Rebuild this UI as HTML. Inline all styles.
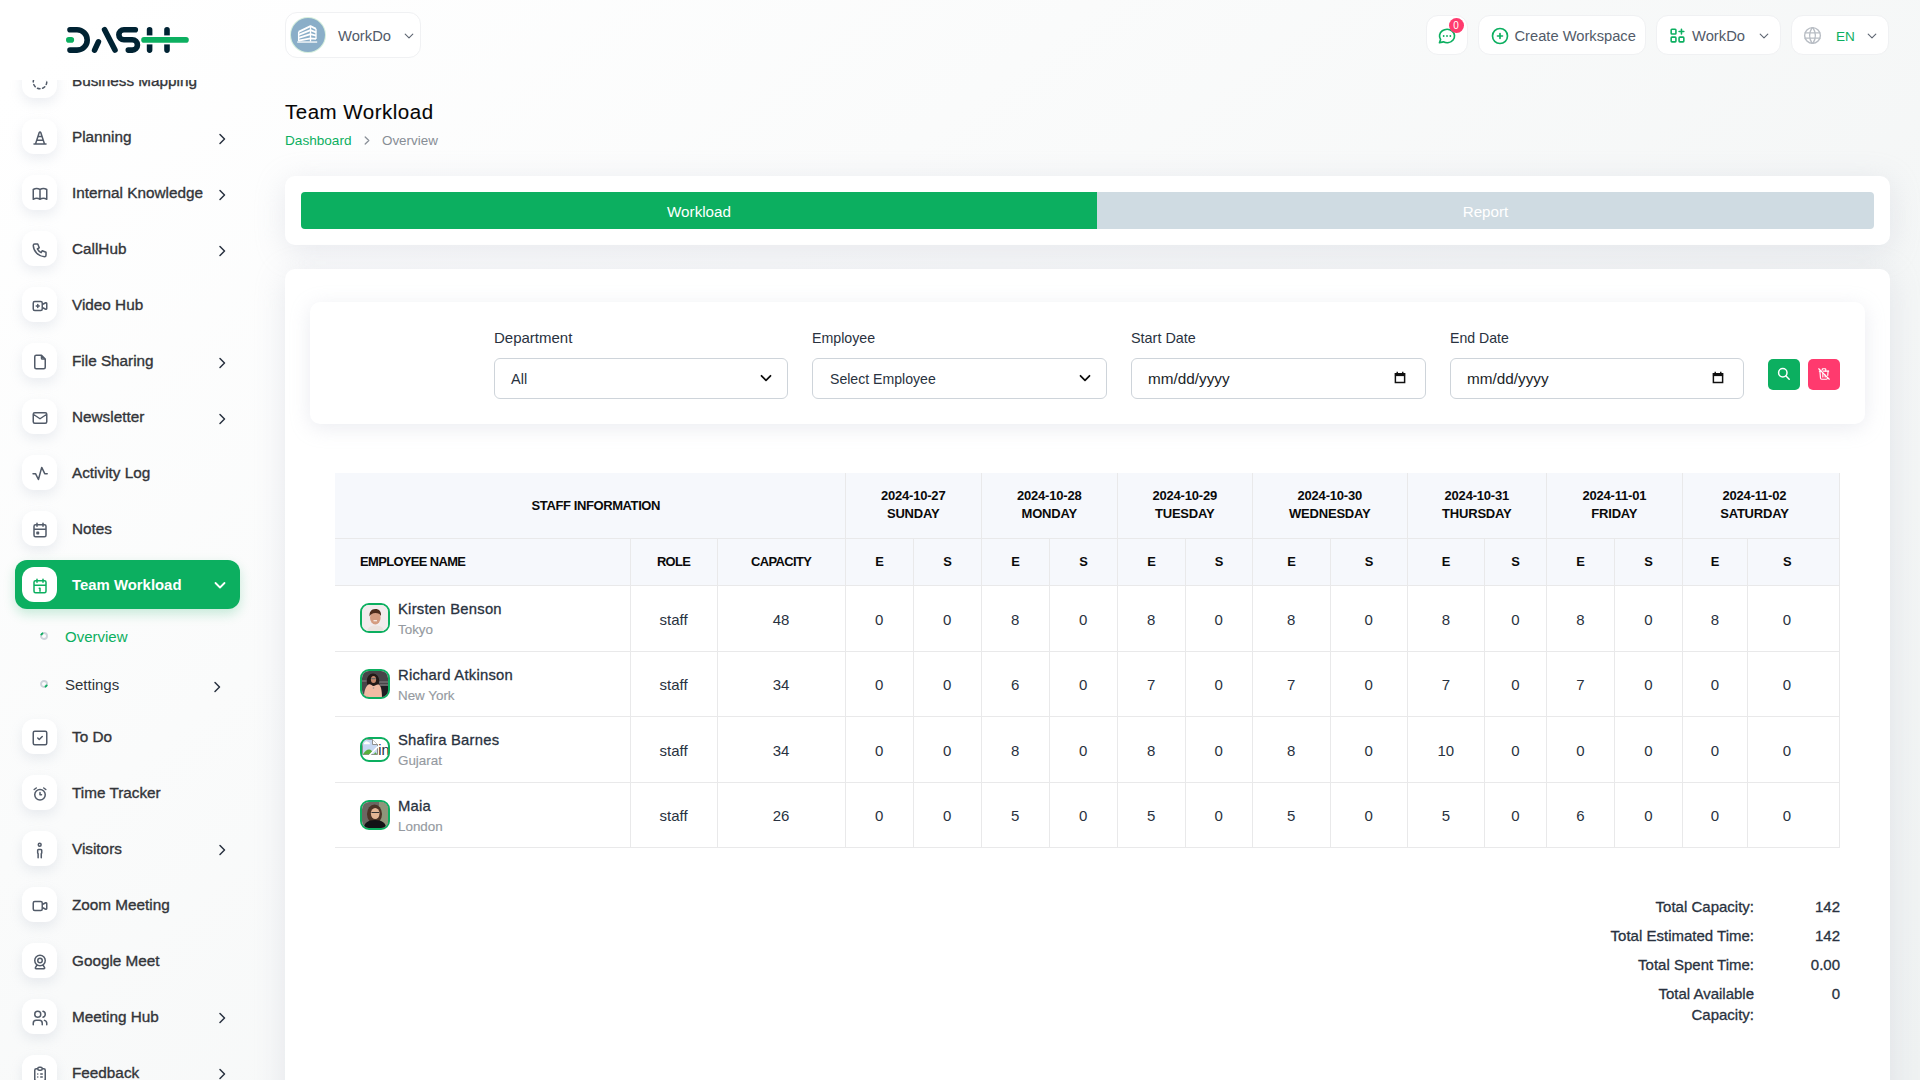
<!DOCTYPE html>
<html><head><meta charset="utf-8">
<style>
*{box-sizing:border-box;margin:0;padding:0}
html,body{width:1920px;height:1080px;overflow:hidden}
body{font-family:"Liberation Sans",sans-serif;color:#293240;position:relative;
background:linear-gradient(141.55deg,rgba(240,244,243,0) 3.46%,#eff2f2 99.86%),#fff}
.abs{position:absolute}
svg{display:block}
/* sidebar */
#navclip{position:absolute;left:0;top:80px;width:255px;height:1000px;overflow:hidden}
.ni{position:absolute;left:0;width:255px;height:36px}
.ni .ib{position:absolute;left:22px;top:0;width:35px;height:35px;background:#fff;border-radius:12px;
box-shadow:0 5px 12px rgba(170,178,195,0.22)}
.ni .ib svg{position:absolute;left:8.5px;top:10px}
.ni .tx{position:absolute;left:72px;top:8.7px;font-size:15.3px;color:#333539;white-space:nowrap;line-height:17px;-webkit-text-stroke:0.35px #333539}
.sub{position:absolute;left:0;width:255px;height:28px}
.sub .dot{position:absolute;left:39px;top:9px}
.sub .stx{position:absolute;left:65px;top:6px;font-size:15px;line-height:17px;color:#30343a}
.ch{position:absolute;left:217px;top:13.5px}
.ch svg{display:block}
.stroke{fill:none;stroke:#525b69;stroke-width:1.6;stroke-linecap:round;stroke-linejoin:round}

.pill{position:absolute;background:#fff;border:1px solid #f0f1f3;border-radius:12px}
.card{position:absolute;background:#fff;border-radius:10px;box-shadow:0 6px 30px rgba(182,186,203,0.3)}
.lbl{position:absolute;font-size:15px;line-height:17px;color:#293240;white-space:nowrap}
.inp{position:absolute;height:41px;border:1px solid #ced4da;border-radius:6px;background:#fff}
.inp span{position:absolute;left:16px;top:12px;font-size:14.5px;line-height:17px;color:#293240;white-space:nowrap}
table.wt{position:absolute;left:335px;top:473px;border-collapse:collapse;table-layout:fixed;width:1505px}
.wt th,.wt td{border:1px solid #e9e9ea;text-align:center;white-space:nowrap;padding:0}
.wt tr:first-child th{border-top:none}
.wt th:first-child,.wt td:first-child{border-left:none}
.wt th{background:#f6f8fc;color:#0a0a0a;font-weight:700;font-size:12.9px;letter-spacing:-0.6px}
.wt td{font-size:15px;color:#293240;padding-top:2.5px}
.wt td:first-child{padding-top:0}
.emp{position:relative;height:64px;text-align:left}
.emp .av{position:absolute;left:25px;top:17.6px;width:30px;height:30px;border:2px solid #0caf60;border-radius:9px;overflow:hidden}
.emp .nm{position:absolute;left:63px;top:15.3px;font-size:14.8px;letter-spacing:0.25px;color:#293240;line-height:17px;-webkit-text-stroke:0.3px #293240}
.emp .ct{position:absolute;left:63px;top:36.6px;font-size:13.4px;color:#959aa1;line-height:15px;-webkit-text-stroke:0.15px #959aa1}
.tot{position:absolute;font-size:15px;line-height:21px;color:#293240;text-align:right;-webkit-text-stroke:0.3px #293240}
</style></head>
<body>
<!-- logo -->
<svg class="abs" style="left:60px;top:20px" width="140" height="40" viewBox="60 20 140 40">
<g fill="none" stroke-linecap="round" stroke-width="5.6">
<path d="M68.8 39.9H71.3" stroke="#0caf60"/>
<path d="M70 29.7H77A10.2 10.2 0 0 1 77 50.1H70" stroke="#002333"/>
<path d="M94.6 50.1L98.4 41.9M104.6 29.7L115 50.1" stroke="#002333"/>
<path d="M135.3 29.7H123.9A5.05 5.05 0 0 0 123.9 39.8H132.3A5.1 5.1 0 0 1 132.3 50.1H128.3" stroke="#002333"/>
<path d="M149.6 29.7V50.1M167 29.7V50.1" stroke="#002333"/>
<path d="M146 39.9H172" stroke="#fff" stroke-width="9" stroke-linecap="butt"/>
<path d="M144 39.9H186" stroke="#0caf60"/>
</g></svg>

<div id="navclip">
<div class="ni" style="top:-16.9px"><div class="ib"><svg width="18" height="18" viewBox="0 0 24 24" style=""><path d="M8.56 3.69a9 9 0 0 0 -2.92 1.95M3.69 8.56a9 9 0 0 0 -.69 3.44M3.69 15.44a9 9 0 0 0 1.95 2.92M8.56 20.31a9 9 0 0 0 3.44 .69M15.44 20.31a9 9 0 0 0 2.92 -1.95M20.31 15.44a9 9 0 0 0 .69 -3.44M20.31 8.56a9 9 0 0 0 -1.95 -2.92M15.44 3.69a9 9 0 0 0 -3.44 -.69" fill="none" stroke="#525b69" stroke-width="2" stroke-linecap="round" stroke-linejoin="round"/></svg></div><div class="tx">Business Mapping</div></div>
<div class="ni" style="top:39.1px"><div class="ib"><svg width="18" height="18" viewBox="0 0 24 24" style=""><path d="M4 20h16M9.4 10h5.2M7.8 15h8.4M6 20l5 -15.275a1.1 1.1 0 0 1 2 0l5 15.275" fill="none" stroke="#525b69" stroke-width="2" stroke-linecap="round" stroke-linejoin="round"/></svg></div><div class="tx">Planning</div><div class="ch"><svg width="10" height="12" viewBox="0 0 10 12"><path d="M3 1.5L7.5 6L3 10.5" fill="none" stroke="#293240" stroke-width="1.5" stroke-linecap="round" stroke-linejoin="round"/></svg></div></div>
<div class="ni" style="top:95.1px"><div class="ib"><svg width="18" height="18" viewBox="0 0 24 24" style=""><path d="M3 19a9 9 0 0 1 9 0a9 9 0 0 1 9 0M3 6a9 9 0 0 1 9 0a9 9 0 0 1 9 0M3 6l0 13M12 6l0 13M21 6l0 13" fill="none" stroke="#525b69" stroke-width="2" stroke-linecap="round" stroke-linejoin="round"/></svg></div><div class="tx">Internal Knowledge</div><div class="ch"><svg width="10" height="12" viewBox="0 0 10 12"><path d="M3 1.5L7.5 6L3 10.5" fill="none" stroke="#293240" stroke-width="1.5" stroke-linecap="round" stroke-linejoin="round"/></svg></div></div>
<div class="ni" style="top:151.1px"><div class="ib"><svg width="18" height="18" viewBox="0 0 24 24" style=""><path d="M5 4h4l2 5l-2.5 1.5a11 11 0 0 0 5 5l1.5 -2.5l5 2v4a2 2 0 0 1 -2 2a16 16 0 0 1 -15 -15a2 2 0 0 1 2 -2" fill="none" stroke="#525b69" stroke-width="2" stroke-linecap="round" stroke-linejoin="round"/></svg></div><div class="tx">CallHub</div><div class="ch"><svg width="10" height="12" viewBox="0 0 10 12"><path d="M3 1.5L7.5 6L3 10.5" fill="none" stroke="#293240" stroke-width="1.5" stroke-linecap="round" stroke-linejoin="round"/></svg></div></div>
<div class="ni" style="top:207.1px"><div class="ib"><svg width="18" height="18" viewBox="0 0 24 24" style=""><path d="M15 10l4.553 -2.276a1 1 0 0 1 1.447 .894v6.764a1 1 0 0 1 -1.447 .894l-4.553 -2.276v-4zM5 6h8a2 2 0 0 1 2 2v8a2 2 0 0 1 -2 2h-8a2 2 0 0 1 -2 -2v-8a2 2 0 0 1 2 -2zM7 12l4 0M9 10l0 4" fill="none" stroke="#525b69" stroke-width="2" stroke-linecap="round" stroke-linejoin="round"/></svg></div><div class="tx">Video Hub</div></div>
<div class="ni" style="top:263.1px"><div class="ib"><svg width="18" height="18" viewBox="0 0 24 24" style=""><path d="M14 3v4a1 1 0 0 0 1 1h4M17 21h-10a2 2 0 0 1 -2 -2v-14a2 2 0 0 1 2 -2h7l5 5v11a2 2 0 0 1 -2 2z" fill="none" stroke="#525b69" stroke-width="2" stroke-linecap="round" stroke-linejoin="round"/></svg></div><div class="tx">File Sharing</div><div class="ch"><svg width="10" height="12" viewBox="0 0 10 12"><path d="M3 1.5L7.5 6L3 10.5" fill="none" stroke="#293240" stroke-width="1.5" stroke-linecap="round" stroke-linejoin="round"/></svg></div></div>
<div class="ni" style="top:319.1px"><div class="ib"><svg width="18" height="18" viewBox="0 0 24 24" style=""><path d="M3 7a2 2 0 0 1 2 -2h14a2 2 0 0 1 2 2v10a2 2 0 0 1 -2 2h-14a2 2 0 0 1 -2 -2v-10zM3 7l9 6l9 -6" fill="none" stroke="#525b69" stroke-width="2" stroke-linecap="round" stroke-linejoin="round"/></svg></div><div class="tx">Newsletter</div><div class="ch"><svg width="10" height="12" viewBox="0 0 10 12"><path d="M3 1.5L7.5 6L3 10.5" fill="none" stroke="#293240" stroke-width="1.5" stroke-linecap="round" stroke-linejoin="round"/></svg></div></div>
<div class="ni" style="top:375.1px"><div class="ib"><svg width="18" height="18" viewBox="0 0 24 24" style=""><path d="M2.7 11.5H6L9.9 19.3L14.3 3.2L18.3 11.5H21.6" fill="none" stroke="#525b69" stroke-width="2" stroke-linecap="round" stroke-linejoin="round"/></svg></div><div class="tx">Activity Log</div></div>
<div class="ni" style="top:431.1px"><div class="ib"><svg width="18" height="18" viewBox="0 0 24 24" style=""><path d="M6 5h12a2 2 0 0 1 2 2v12a2 2 0 0 1 -2 2h-12a2 2 0 0 1 -2 -2v-12a2 2 0 0 1 2 -2zM16 3l0 4M8 3l0 4M4 11l16 0M8 15h2v2h-2z" fill="none" stroke="#525b69" stroke-width="2" stroke-linecap="round" stroke-linejoin="round"/></svg></div><div class="tx">Notes</div></div>
<div class="ni" style="top:638.9px"><div class="ib"><svg width="18" height="18" viewBox="0 0 24 24" style=""><path d="M5 3h14a2 2 0 0 1 2 2v14a2 2 0 0 1 -2 2h-14a2 2 0 0 1 -2 -2v-14a2 2 0 0 1 2 -2zM9 12l2 2l4 -4" fill="none" stroke="#525b69" stroke-width="2" stroke-linecap="round" stroke-linejoin="round"/></svg></div><div class="tx">To Do</div></div>
<div class="ni" style="top:694.9px"><div class="ib"><svg width="18" height="18" viewBox="0 0 24 24" style=""><path d="M12 13m-7 0a7 7 0 1 0 14 0a7 7 0 1 0 -14 0M12 10l0 3l2 0M7 4l-2.75 2M17 4l2.75 2" fill="none" stroke="#525b69" stroke-width="2" stroke-linecap="round" stroke-linejoin="round"/></svg></div><div class="tx">Time Tracker</div></div>
<div class="ni" style="top:750.9px"><div class="ib"><svg width="18" height="18" viewBox="0 0 24 24" style=""><path d="M11.6 5m-1.9 0a1.9 1.9 0 1 0 3.8 0a1.9 1.9 0 1 0 -3.8 0M9.5 22.3V16.9L8.9 16V12.3a1 1 0 0 1 1 -1H13.3a1 1 0 0 1 1 1V16L13.7 16.9V22.3" fill="none" stroke="#525b69" stroke-width="2" stroke-linecap="round" stroke-linejoin="round"/></svg></div><div class="tx">Visitors</div><div class="ch"><svg width="10" height="12" viewBox="0 0 10 12"><path d="M3 1.5L7.5 6L3 10.5" fill="none" stroke="#293240" stroke-width="1.5" stroke-linecap="round" stroke-linejoin="round"/></svg></div></div>
<div class="ni" style="top:806.9px"><div class="ib"><svg width="18" height="18" viewBox="0 0 24 24" style=""><path d="M15 10l4.553 -2.276a1 1 0 0 1 1.447 .894v6.764a1 1 0 0 1 -1.447 .894l-4.553 -2.276v-4zM5 6h8a2 2 0 0 1 2 2v8a2 2 0 0 1 -2 2h-8a2 2 0 0 1 -2 -2v-8a2 2 0 0 1 2 -2z" fill="none" stroke="#525b69" stroke-width="2" stroke-linecap="round" stroke-linejoin="round"/></svg></div><div class="tx">Zoom Meeting</div></div>
<div class="ni" style="top:862.9px"><div class="ib"><svg width="18" height="18" viewBox="0 0 24 24" style=""><path d="M12 10m-7 0a7 7 0 1 0 14 0a7 7 0 1 0 -14 0M12 10m-3 0a3 3 0 1 0 6 0a3 3 0 1 0 -6 0M8 16l-2.091 3.486a1 1 0 0 0 .857 1.514h10.468a1 1 0 0 0 .857 -1.514l-2.091 -3.486" fill="none" stroke="#525b69" stroke-width="2" stroke-linecap="round" stroke-linejoin="round"/></svg></div><div class="tx">Google Meet</div></div>
<div class="ni" style="top:918.9px"><div class="ib"><svg width="18" height="18" viewBox="0 0 24 24" style=""><path d="M9 7m-4 0a4 4 0 1 0 8 0a4 4 0 1 0 -8 0M3 21v-2a4 4 0 0 1 4 -4h4a4 4 0 0 1 4 4v2M16 3.13a4 4 0 0 1 0 7.75M21 21v-2a4 4 0 0 0 -3 -3.85" fill="none" stroke="#525b69" stroke-width="2" stroke-linecap="round" stroke-linejoin="round"/></svg></div><div class="tx">Meeting Hub</div><div class="ch"><svg width="10" height="12" viewBox="0 0 10 12"><path d="M3 1.5L7.5 6L3 10.5" fill="none" stroke="#293240" stroke-width="1.5" stroke-linecap="round" stroke-linejoin="round"/></svg></div></div>
<div class="ni" style="top:974.9px"><div class="ib"><svg width="18" height="18" viewBox="0 0 24 24" style=""><path d="M9 5h-2a2 2 0 0 0 -2 2v12a2 2 0 0 0 2 2h10a2 2 0 0 0 2 -2v-12a2 2 0 0 0 -2 -2h-2M11 3h2a2 2 0 0 1 2 2a2 2 0 0 1 -2 2h-2a2 2 0 0 1 -2 -2a2 2 0 0 1 2 -2zM9 12l.01 0M13 12l2 0M9 16l.01 0M13 16l2 0" fill="none" stroke="#525b69" stroke-width="2" stroke-linecap="round" stroke-linejoin="round"/></svg></div><div class="tx">Feedback</div><div class="ch"><svg width="10" height="12" viewBox="0 0 10 12"><path d="M3 1.5L7.5 6L3 10.5" fill="none" stroke="#293240" stroke-width="1.5" stroke-linecap="round" stroke-linejoin="round"/></svg></div></div><div class="abs" style="left:15px;top:480.2px;width:225px;height:48.5px;background:#0caf60;border-radius:12px;box-shadow:0 5px 12px rgba(12,175,96,0.22)"></div>
<div class="ni" style="top:486.7px"><div class="ib" style="box-shadow:none"><svg width="18" height="18" viewBox="0 0 24 24" style=""><path d="M6 5h12a2 2 0 0 1 2 2v12a2 2 0 0 1 -2 2h-12a2 2 0 0 1 -2 -2v-12a2 2 0 0 1 2 -2zM16 3l0 4M8 3l0 4M4 11l16 0M11 15h1v4" fill="none" stroke="#0caf60" stroke-width="2" stroke-linecap="round" stroke-linejoin="round"/></svg></div><div class="tx" style="color:#fff;font-weight:700;font-size:14.9px;-webkit-text-stroke:0;top:10.8px">Team Workload</div>
<div class="ch" style="left:214px;top:13px"><svg width="12" height="10" viewBox="0 0 12 10"><path d="M1.5 3L6 7.5L10.5 3" fill="none" stroke="#fff" stroke-width="1.8" stroke-linecap="round" stroke-linejoin="round"/></svg></div></div>
<div class="sub" style="top:542px"><svg class="dot" width="10" height="10" viewBox="-1 -1 10 10"><circle cx="4" cy="4" r="3" fill="none" stroke="#cdd2da" stroke-width="1.9"/><path d="M1.1 3.2A3 3 0 0 1 3.2 1.1" fill="none" stroke="#0caf60" stroke-width="1.9"/></svg><div class="stx" style="color:#0caf60">Overview</div></div>
<div class="sub" style="top:590px"><svg class="dot" width="10" height="10" viewBox="-1 -1 10 10"><circle cx="4" cy="4" r="3" fill="none" stroke="#cdd2da" stroke-width="1.9"/><path d="M6.9 4.8A3 3 0 0 1 4.8 6.9" fill="none" stroke="#0caf60" stroke-width="1.9"/></svg><div class="stx">Settings</div><div class="ch" style="left:212px;top:10.5px"><svg width="10" height="12" viewBox="0 0 10 12"><path d="M3 1.5L7.5 6L3 10.5" fill="none" stroke="#293240" stroke-width="1.5" stroke-linecap="round" stroke-linejoin="round"/></svg></div></div>

</div>


<!-- header left -->
<div class="pill" style="left:285px;top:12px;width:136px;height:46px">
 <div class="abs" style="left:5px;top:5px;width:34px;height:34px;border-radius:50%;background:#8aaec8;box-shadow:0 0 0 1px #d6efdd">
  <svg class="abs" style="left:0;top:0" width="34" height="34" viewBox="0 0 34 34"><g stroke="#fff" stroke-width="1.8" fill="none" stroke-linejoin="round"><path d="M7.6 13.9L19.5 8.1L25 10.9M7.6 16.9L19.5 12.1L25 14.3M7.6 19.9L19.5 16.1L25 17.6M7.6 22.7L19.5 20.3L25 20.9"/><path d="M7.6 13.9V23M19.5 8V23.5M25 10.9V21" stroke-width="1.3"/></g><rect x="6.2" y="23.2" width="20" height="1.7" fill="#fff" opacity=".75"/></svg>
 </div>
 <div class="abs" style="left:52px;top:15px;font-size:14.75px;line-height:17px;color:#525b69">WorkDo</div>
 <svg class="abs" style="left:117px;top:19px" width="12" height="8" viewBox="0 0 12 8"><path d="M2.2 2.2L6 5.8L9.8 2.2" fill="none" stroke="#5f6773" stroke-width="1.15" stroke-linecap="round" stroke-linejoin="round"/></svg>
</div>
<!-- header right -->
<div class="pill" style="left:1426px;top:15px;width:42px;height:40px">
 <svg class="abs" style="left:10px;top:9.8px" width="20" height="20" viewBox="0 0 24 24"><path d="M3 20l1.3 -3.9c-2.324 -3.437 -1.426 -7.872 2.1 -10.374c3.526 -2.501 8.59 -2.296 11.845 .48c3.255 2.777 3.695 7.266 1.029 10.501c-2.666 3.235 -7.615 4.215 -11.574 2.293l-4.7 1" fill="none" stroke="#0caf60" stroke-width="2" stroke-linecap="round" stroke-linejoin="round"/><path d="M8 12h.01M12 12h.01M16 12h.01" stroke="#0caf60" stroke-width="2.2" stroke-linecap="round"/></svg>
 <div class="abs" style="left:21.6px;top:1.5px;width:15px;height:15px;border-radius:50%;background:#ff3a6e;color:#fff;font-size:10px;line-height:15px;text-align:center">0</div>
</div>
<div class="pill" style="left:1478px;top:15px;width:168px;height:40px">
 <svg class="abs" style="left:10.5px;top:10px" width="20" height="20" viewBox="0 0 24 24"><circle cx="12" cy="12" r="9" fill="none" stroke="#0caf60" stroke-width="2"/><path d="M9 12h6M12 9v6" stroke="#0caf60" stroke-width="2" stroke-linecap="round"/></svg>
 <div class="abs" style="left:35.5px;top:12px;font-size:14.7px;line-height:17px;color:#525b69">Create Workspace</div>
</div>
<div class="pill" style="left:1656px;top:15px;width:125px;height:40px">
 <svg class="abs" style="left:11px;top:10px" width="19" height="19" viewBox="0 0 24 24"><g fill="none" stroke="#0caf60" stroke-width="2" stroke-linecap="round" stroke-linejoin="round"><rect x="4" y="4" width="6" height="6" rx="1"/><rect x="4" y="14" width="6" height="6" rx="1"/><rect x="14" y="14" width="6" height="6" rx="1"/><path d="M14 7h6M17 4v6"/></g></svg>
 <div class="abs" style="left:35px;top:12px;font-size:14.75px;line-height:17px;color:#525b69">WorkDo</div>
 <svg class="abs" style="left:101px;top:16px" width="12" height="8" viewBox="0 0 12 8"><path d="M2.2 2.2L6 5.8L9.8 2.2" fill="none" stroke="#5f6773" stroke-width="1.15" stroke-linecap="round" stroke-linejoin="round"/></svg>
</div>
<div class="pill" style="left:1791px;top:15px;width:98px;height:40px">
 <svg class="abs" style="left:10px;top:9px" width="21" height="21" viewBox="0 0 24 24"><g fill="none" stroke="#b8bdc4" stroke-width="1.6" stroke-linecap="round" stroke-linejoin="round"><circle cx="12" cy="12" r="9"/><path d="M3.6 9h16.8M3.6 15h16.8M11.5 3a17 17 0 0 0 0 18M12.5 3a17 17 0 0 1 0 18"/></g></svg>
 <div class="abs" style="left:44px;top:12px;font-size:13.6px;line-height:17px;color:#0caf60">EN</div>
 <svg class="abs" style="left:74px;top:16px" width="12" height="8" viewBox="0 0 12 8"><path d="M2.2 2.2L6 5.8L9.8 2.2" fill="none" stroke="#5f6773" stroke-width="1.15" stroke-linecap="round" stroke-linejoin="round"/></svg>
</div>

<!-- title -->
<div class="abs" style="left:285px;top:100px;font-size:20.5px;letter-spacing:0.5px;line-height:24px;color:#060606;-webkit-text-stroke:0.1px #060606">Team Workload</div>
<div class="abs" style="left:285px;top:133px;font-size:13.6px;line-height:16px;color:#0caf60">Dashboard</div>
<svg class="abs" style="left:362px;top:135px" width="10" height="11" viewBox="0 0 10 11"><path d="M3.2 2L6.8 5.5L3.2 9" fill="none" stroke="#8a9098" stroke-width="1.3" stroke-linecap="round" stroke-linejoin="round"/></svg>
<div class="abs" style="left:382px;top:133px;font-size:13.4px;line-height:16px;color:#878d95">Overview</div>

<!-- tabs card -->
<div class="card" style="left:285px;top:176px;width:1605px;height:69px"></div>
<div class="abs" style="left:301px;top:192px;width:796px;height:37px;background:#0caf60;border-radius:4px 0 0 4px;color:#fff;font-size:15.2px;line-height:39px;text-align:center">Workload</div>
<div class="abs" style="left:1097px;top:192px;width:777px;height:37px;background:#cfdbe2;border-radius:0 4px 4px 0;color:#fff;font-size:15.2px;line-height:39px;text-align:center">Report</div>

<!-- main card -->
<div class="card" style="left:285px;top:269px;width:1605px;height:900px"></div>
<div class="card" style="left:310px;top:302px;width:1555px;height:122px;box-shadow:0 4px 20px rgba(182,186,203,0.28)"></div>
<div class="lbl" style="left:494px;top:329px">Department</div>
<div class="lbl" style="left:812px;top:329.7px;font-size:14.2px">Employee</div>
<div class="lbl" style="left:1131px;top:329.5px;font-size:14.4px">Start Date</div>
<div class="lbl" style="left:1450px;top:329.8px;font-size:14.1px">End Date</div>
<div class="inp" style="left:494px;top:358px;width:294px"><span style="left:16px">All</span>
 <svg class="abs" style="left:264px;top:14px" width="14" height="10" viewBox="0 0 14 10"><path d="M2.5 2.8L7 7.3L11.5 2.8" fill="none" stroke="#0d0d0d" stroke-width="1.75" stroke-linecap="round" stroke-linejoin="round"/></svg></div>
<div class="inp" style="left:812px;top:358px;width:295px"><span style="left:17px;font-size:14.1px">Select Employee</span>
 <svg class="abs" style="left:265px;top:14px" width="14" height="10" viewBox="0 0 14 10"><path d="M2.5 2.8L7 7.3L11.5 2.8" fill="none" stroke="#0d0d0d" stroke-width="1.75" stroke-linecap="round" stroke-linejoin="round"/></svg></div>
<div class="inp" style="left:1131px;top:358px;width:295px"><span style="left:16px;font-size:15.3px;top:11px;color:#212529">mm/dd/yyyy</span>
 <svg class="abs" style="left:262px;top:11px" width="12" height="15" viewBox="0 0 13 15"><path d="M1.5 3.5h10v9.5h-10z" fill="none" stroke="#111" stroke-width="1.6"/><path d="M1 3h11v3H1z" fill="#111"/><path d="M3.5 1.2v2.5M9.5 1.2v2.5" stroke="#111" stroke-width="1.5"/></svg></div>
<div class="inp" style="left:1450px;top:358px;width:294px"><span style="left:16px;font-size:15.3px;top:11px;color:#212529">mm/dd/yyyy</span>
 <svg class="abs" style="left:261px;top:11px" width="12" height="15" viewBox="0 0 13 15"><path d="M1.5 3.5h10v9.5h-10z" fill="none" stroke="#111" stroke-width="1.6"/><path d="M1 3h11v3H1z" fill="#111"/><path d="M3.5 1.2v2.5M9.5 1.2v2.5" stroke="#111" stroke-width="1.5"/></svg></div>
<div class="abs" style="left:1768px;top:359px;width:32px;height:31px;background:#0caf60;border-radius:5px">
 <svg class="abs" style="left:9px;top:8px" width="14" height="14" viewBox="0 0 14 14"><circle cx="5.8" cy="5.8" r="4.2" fill="none" stroke="#fff" stroke-width="1.5"/><path d="M9 9L12.2 12.2" stroke="#fff" stroke-width="1.5" stroke-linecap="round"/></svg></div>
<div class="abs" style="left:1808px;top:359px;width:32px;height:31px;background:#ff3a6e;border-radius:5px">
 <svg class="abs" style="left:9px;top:8px" width="14" height="14" viewBox="0 0 24 24"><g fill="none" stroke="#fff" stroke-width="2" stroke-linecap="round" stroke-linejoin="round"><path d="M3 3l18 18"/><path d="M4 7h3m4 0h9"/><path d="M10 11v6M14 14v3"/><path d="M5 7l1 12a2 2 0 0 0 2 2h8a2 2 0 0 0 2 -2l.077 -.923"/><path d="M18.384 14.373l.616 -7.373"/><path d="M9 5v-1a1 1 0 0 1 1 -1h4a1 1 0 0 1 1 1v3"/></g></svg></div>

<table class="wt"><colgroup><col style="width:295px"><col style="width:87px"><col style="width:128px"><col style="width:68px"><col style="width:68px"><col style="width:68px"><col style="width:68px"><col style="width:68px"><col style="width:67px"><col style="width:78px"><col style="width:77px"><col style="width:77px"><col style="width:62px"><col style="width:68px"><col style="width:68px"><col style="width:65px"><col style="width:92px"></colgroup>
<tr style="height:65px"><th colspan="3" style="padding-left:12px;font-size:13px;letter-spacing:-0.4px">STAFF INFORMATION</th><th colspan="2" style="line-height:18.5px;font-size:13px;letter-spacing:-0.2px">2024-10-27<br>SUNDAY</th><th colspan="2" style="line-height:18.5px;font-size:13px;letter-spacing:-0.2px">2024-10-28<br>MONDAY</th><th colspan="2" style="line-height:18.5px;font-size:13px;letter-spacing:-0.2px">2024-10-29<br>TUESDAY</th><th colspan="2" style="line-height:18.5px;font-size:13px;letter-spacing:-0.2px">2024-10-30<br>WEDNESDAY</th><th colspan="2" style="line-height:18.5px;font-size:13px;letter-spacing:-0.2px">2024-10-31<br>THURSDAY</th><th colspan="2" style="line-height:18.5px;font-size:13px;letter-spacing:-0.2px">2024-11-01<br>FRIDAY</th><th colspan="2" style="line-height:18.5px;font-size:13px;letter-spacing:-0.2px;padding-right:13px">2024-11-02<br>SATURDAY</th></tr>
<tr style="height:47px"><th style="text-align:left;padding-left:25px">EMPLOYEE NAME</th><th>ROLE</th><th>CAPACITY</th><th>E</th><th>S</th><th>E</th><th>S</th><th>E</th><th>S</th><th>E</th><th>S</th><th>E</th><th>S</th><th>E</th><th>S</th><th>E</th><th style="padding-right:13px">S</th></tr>
<tr style="height:66px"><td><div class="emp" style="height:65px"><div class="av" style=""><svg width="26" height="26" viewBox="0 0 26 26"><rect width="26" height="26" fill="#f2eced"/><path d="M5 26c1-4 4-5.5 8.5-5.5s7.5 1.5 8.5 5.5z" fill="#ebe3df"/><ellipse cx="13.3" cy="12.8" rx="5.3" ry="6.8" fill="#d49c80"/><path d="M7.6 11.5c-.6-4.5 1.6-7.5 5.6-7.6c4.2 0 6.3 2.6 5.8 7.2c-.8-2-2.6-3.2-5.6-3.2s-5 1.4-5.8 3.6z" fill="#4e2c1c"/><path d="M11.5 15.8h3.5" stroke="#fff" stroke-width="1.1"/></svg></div><div class="nm">Kirsten Benson</div><div class="ct">Tokyo</div></div></td><td>staff</td><td>48</td><td>0</td><td>0</td><td>8</td><td>0</td><td>8</td><td>0</td><td>8</td><td>0</td><td>8</td><td>0</td><td>8</td><td>0</td><td>8</td><td style="padding-right:13px">0</td></tr>
<tr style="height:65px"><td><div class="emp" style="height:64px"><div class="av" style=""><svg width="26" height="26" viewBox="0 0 26 26"><rect width="26" height="26" fill="#474548"/><path d="M0 10h5M17 11h9M18 14h8" stroke="#8a8688" stroke-width="1"/><rect x="18" y="15" width="8" height="11" fill="#1f1d22"/><ellipse cx="11" cy="10" rx="6.3" ry="7.5" fill="#221a18"/><ellipse cx="11.5" cy="8.5" rx="2.6" ry="3.6" fill="#c4866a"/><path d="M9.3 7.6h4.4" stroke="#6a6a6a" stroke-width="1.3"/><path d="M2 26c0-6 2-11 4.5-12.5c2-.8 3.5 1.5 5 1.5s3-2 5-1.5c2.5 .8 3.5 6 3.5 12.5z" fill="#f1bba3"/><circle cx="11.5" cy="17" r=".8" fill="#9a9a9a"/></svg></div><div class="nm">Richard Atkinson</div><div class="ct">New York</div></div></td><td>staff</td><td>34</td><td>0</td><td>0</td><td>6</td><td>0</td><td>7</td><td>0</td><td>7</td><td>0</td><td>7</td><td>0</td><td>7</td><td>0</td><td>0</td><td style="padding-right:13px">0</td></tr>
<tr style="height:66px"><td><div class="emp" style="height:65px"><div class="av" style="top:20px;height:25px;width:30px;border-radius:9px;background:#fff"><svg style="position:absolute;left:0;top:0" width="16" height="16" viewBox="0 0 16 16"><path d="M0.5 0.5H10.5L15.5 5.5V15.5H0.5Z" fill="#c6d7f2" stroke="#8f8f8f"/><path d="M1.8 5.2h6.2c0-1.4-.9-2.3-2-2.3c-.8-1-2.6-.9-3 .3c-.8 .1-1.2 1-1.2 2z" fill="#fff"/><path d="M1 15.2C3 12.2 5 10.3 7.2 10.5C9 10.7 10 12 10.8 13.2L8.6 15.2Z" fill="#5aad3a"/><path d="M11.6 15.2L13.6 13.3L15 15.2Z" fill="#5aad3a"/><path d="M10.5 0.5V5.5H15.5" fill="#fff" stroke="#8f8f8f"/><path d="M7.4 16.2L16.2 7.4" stroke="#fff" stroke-width="1.6"/></svg><div style="position:absolute;left:16.3px;top:3.6px;font-size:14.5px;line-height:16px;color:#293240">in</div></div><div class="nm">Shafira Barnes</div><div class="ct">Gujarat</div></div></td><td>staff</td><td>34</td><td>0</td><td>0</td><td>8</td><td>0</td><td>8</td><td>0</td><td>8</td><td>0</td><td>10</td><td>0</td><td>0</td><td>0</td><td>0</td><td style="padding-right:13px">0</td></tr>
<tr style="height:65px"><td><div class="emp" style="height:64px"><div class="av" style=""><svg width="26" height="26" viewBox="0 0 26 26"><rect width="26" height="26" fill="#6b6762"/><rect x="17" width="9" height="26" fill="#8f957a"/><ellipse cx="12.5" cy="12" rx="7.5" ry="9.5" fill="#4b3427"/><ellipse cx="13.2" cy="11.5" rx="4.3" ry="5.6" fill="#e3b594"/><path d="M9.5 10.5h7.5" stroke="#333" stroke-width="1.2"/><path d="M2 26c0-5 4-8 11-8s11 3 11 8z" fill="#121316"/></svg></div><div class="nm">Maia</div><div class="ct">London</div></div></td><td>staff</td><td>26</td><td>0</td><td>0</td><td>5</td><td>0</td><td>5</td><td>0</td><td>5</td><td>0</td><td>5</td><td>0</td><td>6</td><td>0</td><td>0</td><td style="padding-right:13px">0</td></tr>
</table>

<!-- totals -->
<div class="tot" style="left:1502px;top:896px;width:252px">Total Capacity:</div>
<div class="tot" style="left:1760px;top:896px;width:80px">142</div>
<div class="tot" style="left:1502px;top:925px;width:252px">Total Estimated Time:</div>
<div class="tot" style="left:1760px;top:925px;width:80px">142</div>
<div class="tot" style="left:1502px;top:954px;width:252px">Total Spent Time:</div>
<div class="tot" style="left:1760px;top:954px;width:80px">0.00</div>
<div class="tot" style="left:1502px;top:983px;width:252px">Total Available<br>Capacity:</div>
<div class="tot" style="left:1760px;top:983px;width:80px">0</div>

</body></html>
